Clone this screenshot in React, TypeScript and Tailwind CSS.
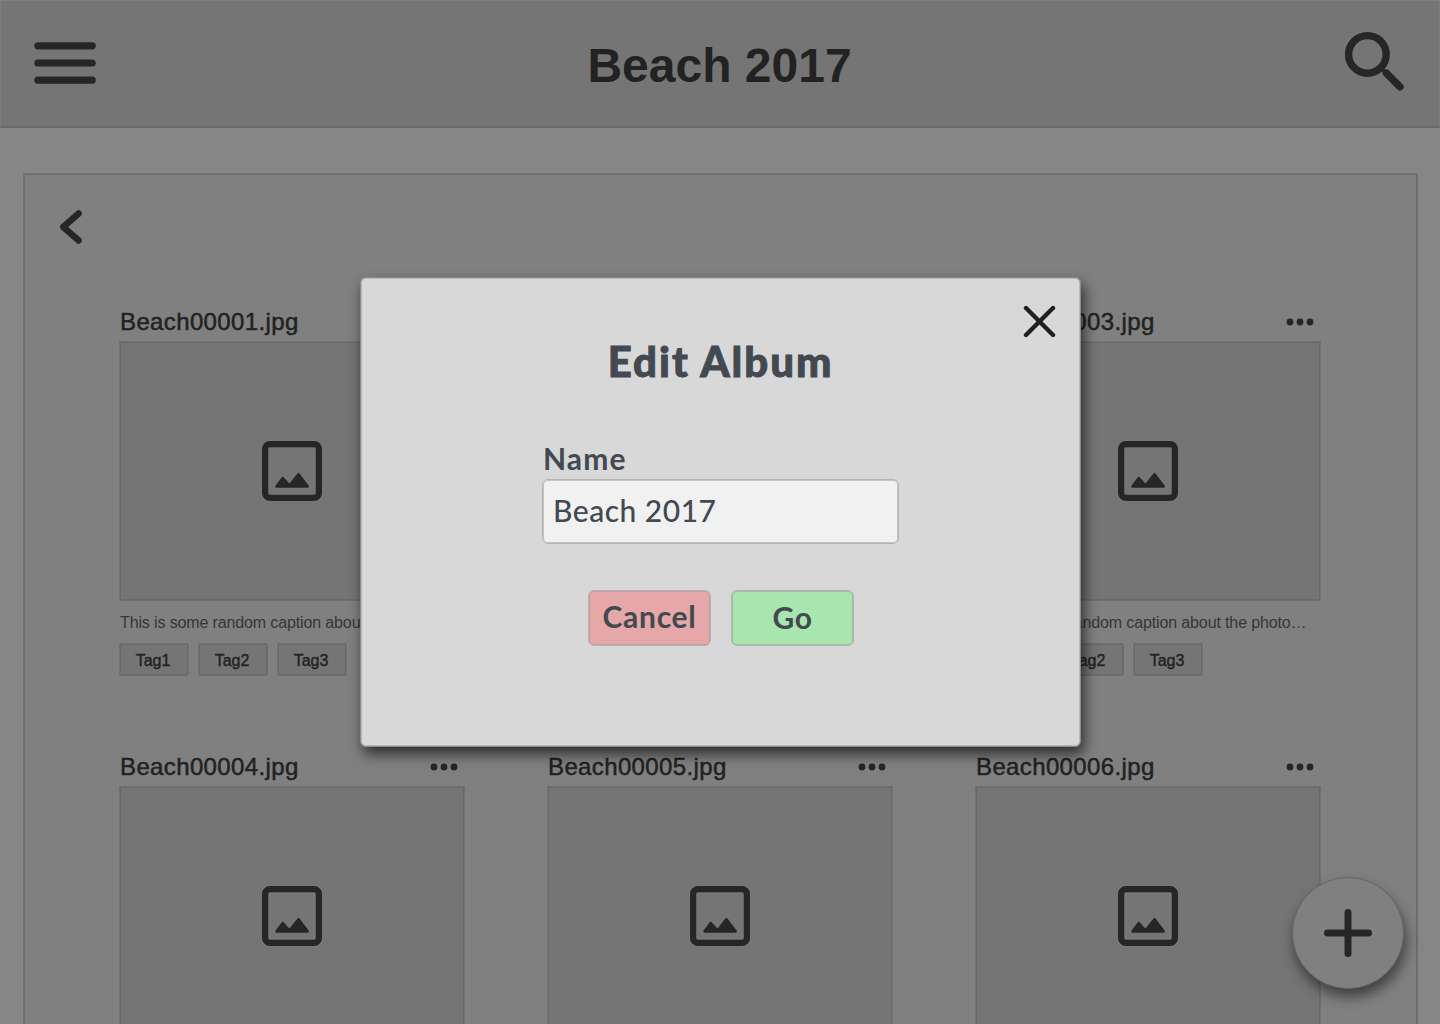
import React from "react";

const INK = "#262626";

function MenuIcon() {
  return (
    <svg width="64" height="44" viewBox="0 0 64 44" fill="none" stroke={INK} strokeWidth="7.2" strokeLinecap="round">
      <path d="M5.9 4.8H60.2M5.9 22H60.2M5.9 39.2H60.2" />
    </svg>
  );
}

function SearchIcon() {
  return (
    <svg width="60" height="60" viewBox="0 0 60 60" fill="none" stroke={INK}>
      <circle cx="23.4" cy="23.4" r="18.8" strokeWidth="7.4" />
      <path d="M37.5 37.5L41 41" strokeWidth="3.8" />
      <path d="M42.4 42.2L56 55.8" strokeWidth="7.4" strokeLinecap="round" />
    </svg>
  );
}

function BackIcon() {
  return (
    <svg width="24" height="36" viewBox="0 0 24 36" fill="none" stroke={INK} strokeWidth="6.4" strokeLinecap="round" strokeLinejoin="round">
      <path d="M19.7 4.5L4.2 18L19.7 31.5" />
    </svg>
  );
}

function PhotoIcon() {
  return (
    <svg width="60" height="60" viewBox="0 0 60 60">
      <rect x="3.1" y="3.1" width="53.8" height="53.8" rx="5" fill="none" stroke={INK} strokeWidth="6.2" />
      <path
        d="M14.6 45.4L20.8 37.1L27.5 44.6L36.5 33.2L45.6 45.4Z"
        fill={INK}
        stroke={INK}
        strokeWidth="2.6"
        strokeLinejoin="round"
      />
    </svg>
  );
}

function DotsIcon() {
  return (
    <svg width="28" height="8" viewBox="0 0 28 8" fill={INK}>
      <circle cx="4" cy="4" r="3.4" />
      <circle cx="14" cy="4" r="3.4" />
      <circle cx="24" cy="4" r="3.4" />
    </svg>
  );
}

type Photo = { name: string; caption?: string; tags?: string[] };

const CAPTION = "This is some random caption about the photo…";
const TAGS = ["Tag1", "Tag2", "Tag3"];

const PHOTOS: Photo[] = [
  { name: "Beach00001.jpg", caption: CAPTION, tags: TAGS },
  { name: "Beach00002.jpg" },
  { name: "Beach00003.jpg", caption: CAPTION, tags: TAGS },
  { name: "Beach00004.jpg" },
  { name: "Beach00005.jpg" },
  { name: "Beach00006.jpg" },
];

function Card({ name, caption, tags }: Photo) {
  return (
    <article className="flex h-[445px] w-[346px] flex-col">
      <div className="flex h-[39px] items-center justify-between pt-px pr-[7px] pl-px">
        <h2 className="text-2xl tracking-[0.37px] text-[#222] [-webkit-text-stroke:0.5px_#222]">{name}</h2>
        <DotsIcon />
      </div>
      <div className="flex h-[260px] shrink-0 items-center justify-center border border-[#707070] bg-[#757575] shadow-[inset_0_0_0_1px_#6a6a6a]">
        <PhotoIcon />
      </div>
      {caption && (
        <p className="mt-[10px] pl-px text-base leading-6 tracking-[-0.13px] whitespace-nowrap text-[#363636]">{caption}</p>
      )}
      {tags && (
        <div className="mt-[8px] flex gap-[9px]">
          {tags.map((t) => (
            <span
              key={t}
              className="flex h-[33px] w-[70px] items-center justify-center rounded-xs border border-[#707070] bg-[#757575] pt-[2px] pr-[2px] text-base text-[#222] shadow-[inset_0_0_0_1px_#6a6a6a] [-webkit-text-stroke:0.4px_#222]"
            >
              {t}
            </span>
          ))}
        </div>
      )}
    </article>
  );
}

export default function App() {
  return (
    <div className="relative flex h-[1024px] w-[1440px] flex-col overflow-hidden bg-[#868686] font-['Liberation_Sans',sans-serif]">
      <header className="grid h-[128px] shrink-0 grid-cols-[1fr_auto_1fr] items-center border-x border-t border-b-2 border-x-[#7e7e7e] border-t-[#7e7e7e] border-b-[#6b6b6b] bg-[#757575] pr-[35px] pl-[31px]">
        <div className="pb-[2px]">
          <MenuIcon />
        </div>
        <h1 className="pt-[5px] pl-[3px] text-5xl leading-[56px] font-bold text-[#222]">Beach 2017</h1>
        <div className="justify-self-end pb-[6px]">
          <SearchIcon />
        </div>
      </header>

      <main className="mt-[45px] ml-[23px] flex h-[1000px] w-[1395px] shrink-0 flex-col border border-[#717171] bg-[#808080] shadow-[inset_0_0_0_1px_#6d6d6d]">
        <div className="flex h-[128px] shrink-0 pt-[35px] pl-[35px]">
          <BackIcon />
        </div>
        <div className="grid grid-cols-[346px_346px_346px] gap-x-[82px] pl-[95px]">
          {PHOTOS.map((p) => (
            <Card key={p.name} {...p} />
          ))}
        </div>
      </main>

      <button
        aria-label="Add"
        className="absolute top-[877px] left-[1292px] flex size-[112px] items-center justify-center rounded-full border border-[#666] bg-[#808080] shadow-[2px_8px_13px_rgba(0,0,0,0.5)]"
      >
        <svg width="48" height="48" viewBox="0 0 48 48" stroke={INK} strokeWidth="7" strokeLinecap="round">
          <path d="M24 3.5V44.5M3.5 24H44.5" />
        </svg>
      </button>

      <section
        role="dialog"
        className="absolute top-[277px] left-[360px] flex h-[470px] w-[721px] flex-col items-center rounded-md border border-[#8b8b8b] bg-[#d8d8d8] font-['Lato',sans-serif] text-[#434951] shadow-[inset_0_0_0_1px_#b8b8b8,3px_7px_14px_rgba(0,0,0,0.65)]"
      >
        <button aria-label="Close" className="mt-[27px] mr-[23px] self-end">
          <svg width="34" height="34" viewBox="0 0 34 34" stroke="#202020" strokeWidth="4.4" strokeLinecap="round">
            <path d="M3 3L30 30M30 3L3 30" />
          </svg>
        </button>
        <h2 className="-mt-[3px] text-[42px] leading-[50px] font-black tracking-[1.95px] [-webkit-text-stroke:0.9px_#434951]">
          Edit Album
        </h2>
        <div className="mt-[52px] flex w-[357px] flex-col">
          <label className="pl-px text-[30px] leading-[40px] font-bold tracking-[1.1px]">Name</label>
          <div className="mt-px flex h-[65px] items-center rounded-md border border-[#b4b4b4] bg-[#f1f1f1] pb-[2px] pl-[10px] text-[30px] font-medium tracking-[0.5px] shadow-[inset_0_0_0_1px_#c4c4c4]">
            Beach 2017
          </div>
        </div>
        <div className="mt-[46px] flex gap-[20px] pl-px text-[30px] leading-[36px] font-bold tracking-[0.7px]">
          <button className="flex h-[56px] w-[123px] items-center justify-center rounded-md border border-[#b4b4b4] bg-[#e5a7a7] pb-[4px] shadow-[inset_0_0_0_1px_#be9f9f]">
            Cancel
          </button>
          <button className="flex h-[56px] w-[123px] items-center justify-center rounded-md border border-[#b4b4b4] bg-[#a7e6af] pb-[2px] shadow-[inset_0_0_0_1px_#9fbea3]">
            Go
          </button>
        </div>
      </section>
    </div>
  );
}
